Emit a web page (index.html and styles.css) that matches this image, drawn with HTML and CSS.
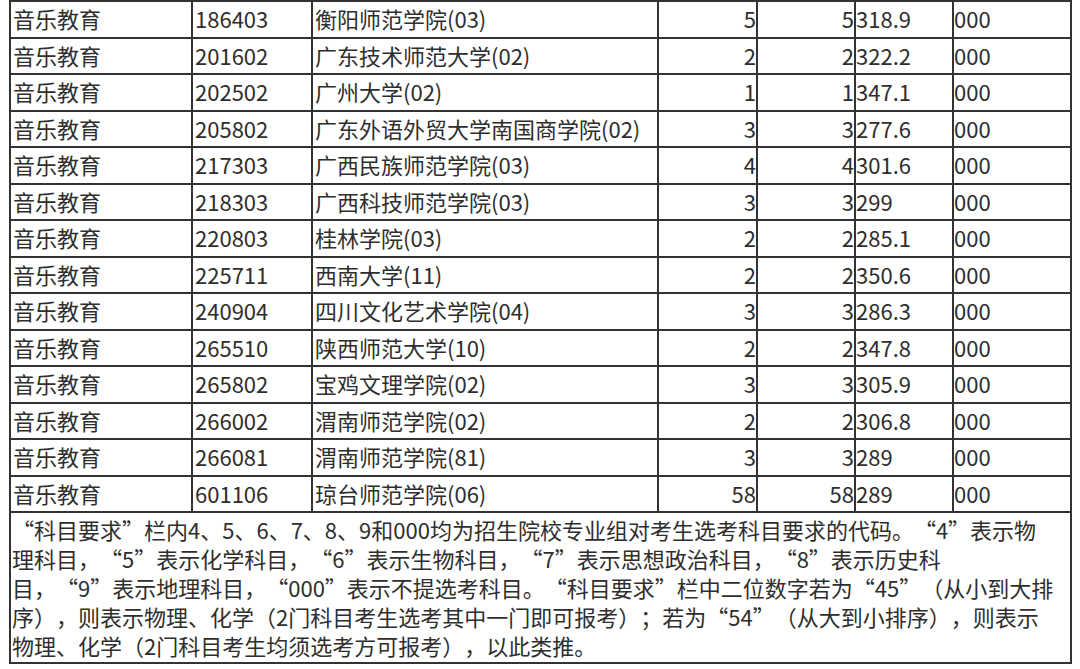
FILE: index.html
```html
<!DOCTYPE html>
<html lang="zh-CN">
<head>
<meta charset="utf-8">
<title>音乐教育</title>
<link rel="stylesheet" href="styles.css">
</head>
<body>
<table class="grid">
  <colgroup>
    <col class="c1"><col class="c2"><col class="c3"><col class="c4"><col class="c5"><col class="c6"><col class="c7">
  </colgroup>
  <tbody>
    <tr><td>音乐教育</td><td>186403</td><td>衡阳师范学院(03)</td><td class="num">5</td><td class="num">5</td><td class="flush">318.9</td><td class="flush">000</td></tr>
    <tr><td>音乐教育</td><td>201602</td><td>广东技术师范大学(02)</td><td class="num">2</td><td class="num">2</td><td class="flush">322.2</td><td class="flush">000</td></tr>
    <tr><td>音乐教育</td><td>202502</td><td>广州大学(02)</td><td class="num">1</td><td class="num">1</td><td class="flush">347.1</td><td class="flush">000</td></tr>
    <tr><td>音乐教育</td><td>205802</td><td>广东外语外贸大学南国商学院(02)</td><td class="num">3</td><td class="num">3</td><td class="flush">277.6</td><td class="flush">000</td></tr>
    <tr><td>音乐教育</td><td>217303</td><td>广西民族师范学院(03)</td><td class="num">4</td><td class="num">4</td><td class="flush">301.6</td><td class="flush">000</td></tr>
    <tr><td>音乐教育</td><td>218303</td><td>广西科技师范学院(03)</td><td class="num">3</td><td class="num">3</td><td class="flush">299</td><td class="flush">000</td></tr>
    <tr><td>音乐教育</td><td>220803</td><td>桂林学院(03)</td><td class="num">2</td><td class="num">2</td><td class="flush">285.1</td><td class="flush">000</td></tr>
    <tr><td>音乐教育</td><td>225711</td><td>西南大学(11)</td><td class="num">2</td><td class="num">2</td><td class="flush">350.6</td><td class="flush">000</td></tr>
    <tr><td>音乐教育</td><td>240904</td><td>四川文化艺术学院(04)</td><td class="num">3</td><td class="num">3</td><td class="flush">286.3</td><td class="flush">000</td></tr>
    <tr><td>音乐教育</td><td>265510</td><td>陕西师范大学(10)</td><td class="num">2</td><td class="num">2</td><td class="flush">347.8</td><td class="flush">000</td></tr>
    <tr><td>音乐教育</td><td>265802</td><td>宝鸡文理学院(02)</td><td class="num">3</td><td class="num">3</td><td class="flush">305.9</td><td class="flush">000</td></tr>
    <tr><td>音乐教育</td><td>266002</td><td>渭南师范学院(02)</td><td class="num">2</td><td class="num">2</td><td class="flush">306.8</td><td class="flush">000</td></tr>
    <tr><td>音乐教育</td><td>266081</td><td>渭南师范学院(81)</td><td class="num">3</td><td class="num">3</td><td class="flush">289</td><td class="flush">000</td></tr>
    <tr><td>音乐教育</td><td>601106</td><td>琼台师范学院(06)</td><td class="num">58</td><td class="num">58</td><td class="flush">289</td><td class="flush">000</td></tr>
    <tr>
      <td class="note" colspan="7">“科目要求”栏内4、5、6、7、8、9和000均为招生院校专业组对考生选考科目要求的代码。“4”表示物<br>理科目，“5”表示化学科目，“6”表示生物科目，“7”表示思想政治科目，“8”表示历史科<br>目，“9”表示地理科目，“000”表示不提选考科目。“科目要求”栏中二位数字若为“45”（从小到大排<br>序），则表示物理、化学（2门科目考生选考其中一门即可报考）；若为“54”（从大到小排序），则表示<br>物理、化学（2门科目考生均须选考方可报考），以此类推。</td>
    </tr>
  </tbody>
</table>
</body>
</html>
```

FILE: styles.css
```css
html, body {
  margin: 0;
  padding: 0;
  background: #ffffff;
}

body {
  padding-left: 9px;
  font-family: "Noto Sans CJK SC", "Noto Sans", sans-serif;
  font-size: 22px;
  color: #2e2e2e;
  text-spacing-trim: space-all;
}

.grid {
  border-collapse: collapse;
  table-layout: fixed;
  width: 1061px;
}

.c1 { width: 182px; }
.c2 { width: 120px; }
.c3 { width: 346px; }
.c4 { width: 99px; }
.c5 { width: 98px; }
.c6 { width: 98px; }
.c7 { width: 118px; }

.grid td {
  border: 2px solid #333333;
  height: 32.5px;
  padding: 0 0 2px 2px;
  line-height: 30px;
  white-space: nowrap;
  overflow: hidden;
  vertical-align: middle;
}

.grid td.num {
  text-align: right;
  padding: 0 0 2px 0;
}

.grid td.flush {
  padding: 0 0 2px 0;
}

.grid td.note {
  height: auto;
  line-height: 29px;
  padding: 2px 0 2px 1px;
  vertical-align: top;
}
```
